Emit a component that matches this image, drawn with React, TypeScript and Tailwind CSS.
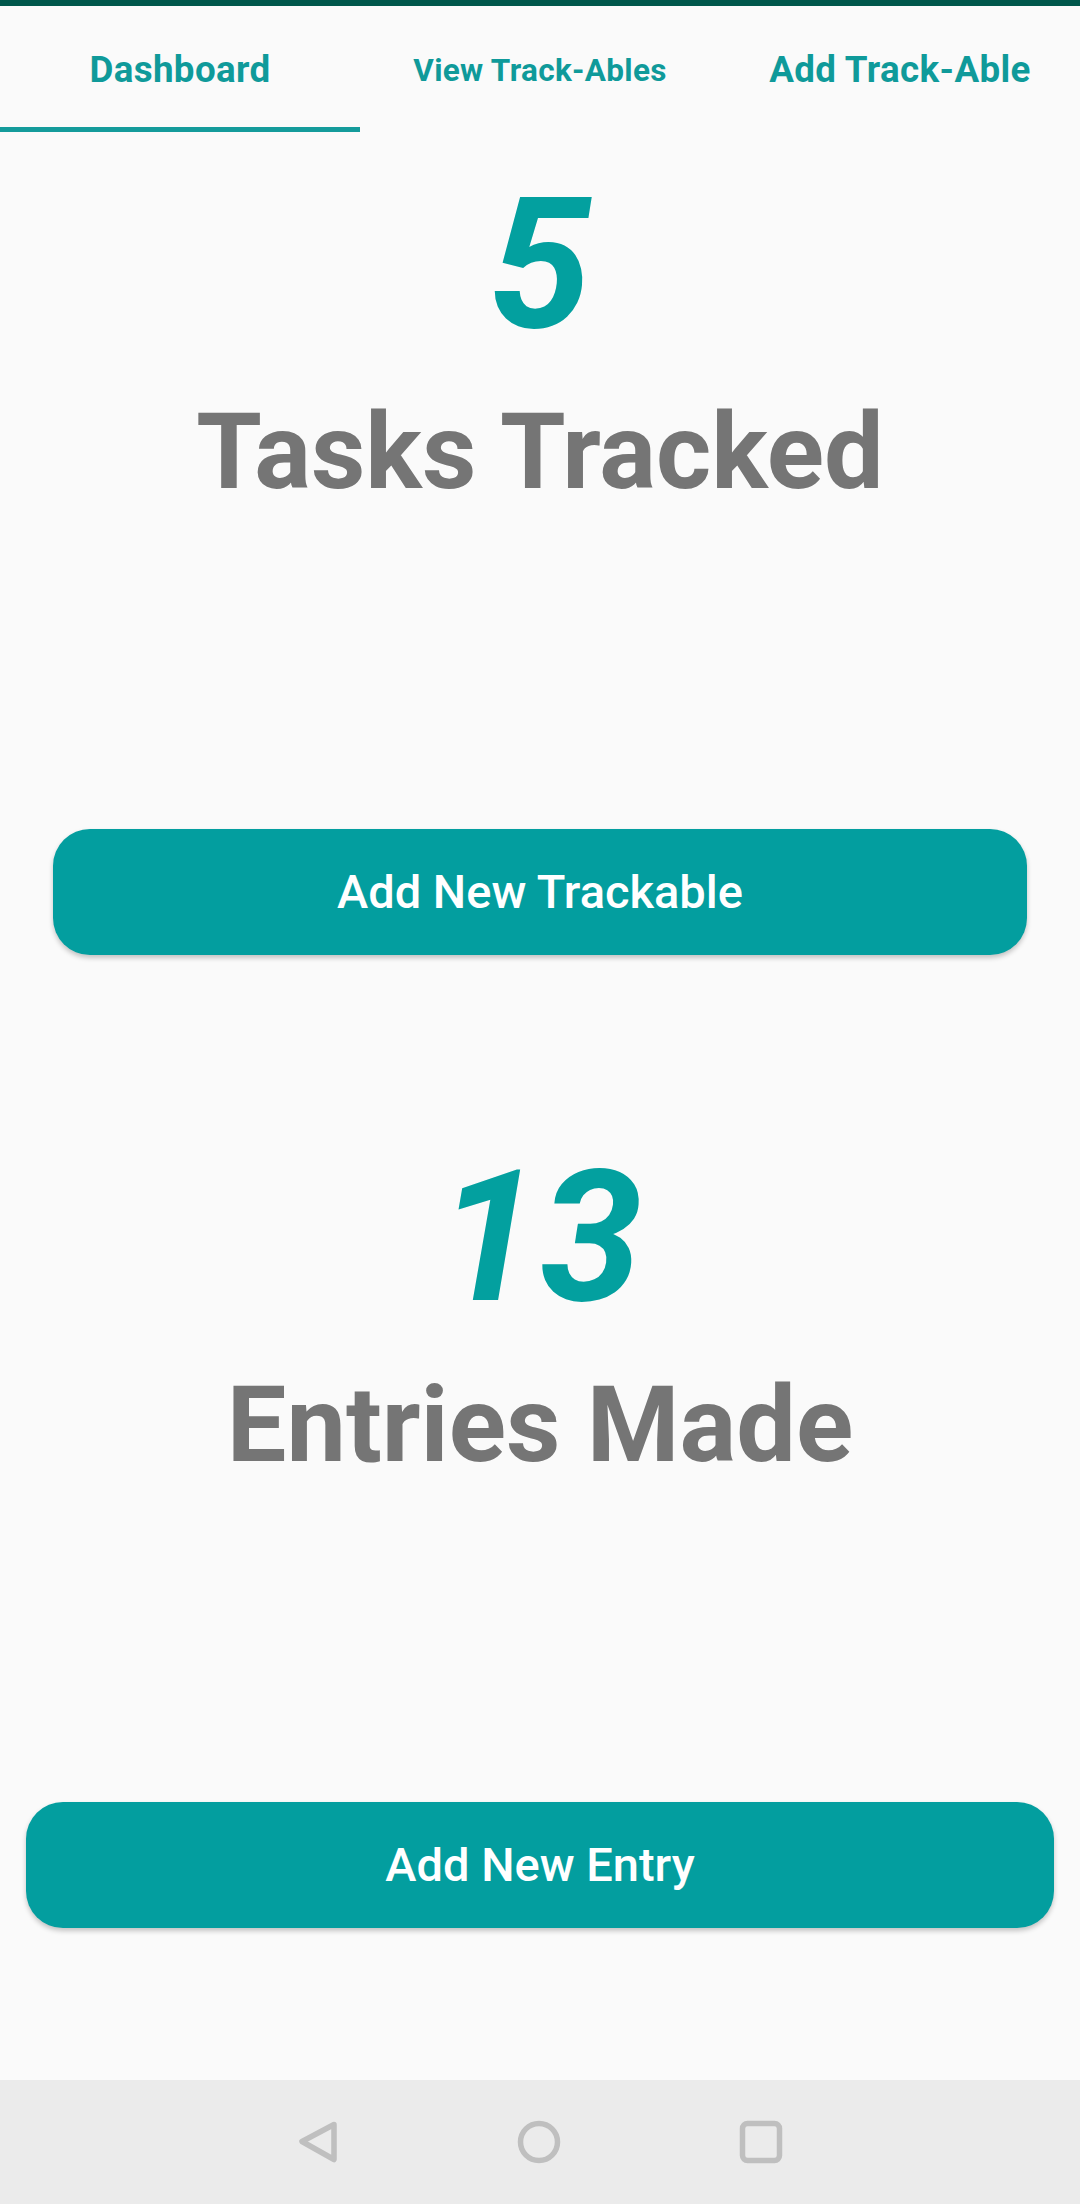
const tabs = [
  { label: "Dashboard", active: true, small: false },
  { label: "View Track-Ables", active: false, small: true },
  { label: "Add Track-Able", active: false, small: false },
];

function TabBar() {
  return (
    <div className="flex h-[126px] bg-[#fafafa]">
      {tabs.map((tab) => (
        <div key={tab.label} className="relative flex flex-1 items-center justify-center pt-[3px]">
          <span
            className={
              tab.small
                ? "font-bold text-[31.5px] leading-none tracking-[0.01em] text-[#0f9a9a]"
                : "font-bold text-[36.75px] leading-none tracking-[0.01em] text-[#0f9a9a]"
            }
          >
            {tab.label}
          </span>
          {tab.active && <div className="absolute bottom-0 left-0 right-0 h-[5px] bg-[#149b9b]" />}
        </div>
      ))}
    </div>
  );
}

function Stat({ value, label }: { value: string; label: string }) {
  return (
    <div className="flex flex-col items-center">
      <div className="text-[184px] leading-none font-bold italic text-[#03a09f]">{value}</div>
      <div className="mt-[43px] text-[106px] leading-none font-bold text-[#757575]">{label}</div>
    </div>
  );
}

function ActionButton({ label, className }: { label: string; className?: string }) {
  return (
    <button
      className={
        "flex h-[126px] items-center justify-center rounded-[37px] bg-[#039e9f] text-[47px] font-medium text-white shadow-[0_3px_5px_rgba(0,0,0,0.22)] " +
        (className ?? "")
      }
    >
      {label}
    </button>
  );
}

function NavBar() {
  return (
    <div className="flex h-[124px] items-center justify-center gap-[178px] bg-[#ebebeb]">
      <svg width="42" height="44" viewBox="0 0 42 44" fill="none">
        <path
          d="M37 4.5 L5 21.5 L37 39.5 Z"
          stroke="#bfbfbf"
          strokeWidth="5.5"
          strokeLinejoin="round"
        />
      </svg>
      <svg width="44" height="44" viewBox="0 0 44 44" fill="none">
        <circle cx="22" cy="22" r="18.5" stroke="#bfbfbf" strokeWidth="5.5" />
      </svg>
      <svg width="44" height="44" viewBox="0 0 44 44" fill="none">
        <rect x="3.5" y="3.5" width="37" height="37" rx="5" stroke="#bfbfbf" strokeWidth="5.5" />
      </svg>
    </div>
  );
}

export default function App() {
  return (
    <div
      className="flex h-[2204px] w-[1080px] flex-col bg-[#fafafa]"
      style={{ fontFamily: "Roboto, 'Noto Sans', sans-serif" }}
    >
      <div className="h-[6px] bg-[#00574b]" />
      <TabBar />
      <div className="flex flex-1 flex-col">
        <div className="mt-[40px]">
          <Stat value="5" label="Tasks Tracked" />
        </div>
        <ActionButton label="Add New Trackable" className="mx-[53px] mt-[324px]" />
        <div className="mt-[190px]">
          <Stat value="13" label="Entries Made" />
        </div>
        <ActionButton label="Add New Entry" className="mx-[26px] mt-[324px]" />
      </div>
      <NavBar />
    </div>
  );
}
